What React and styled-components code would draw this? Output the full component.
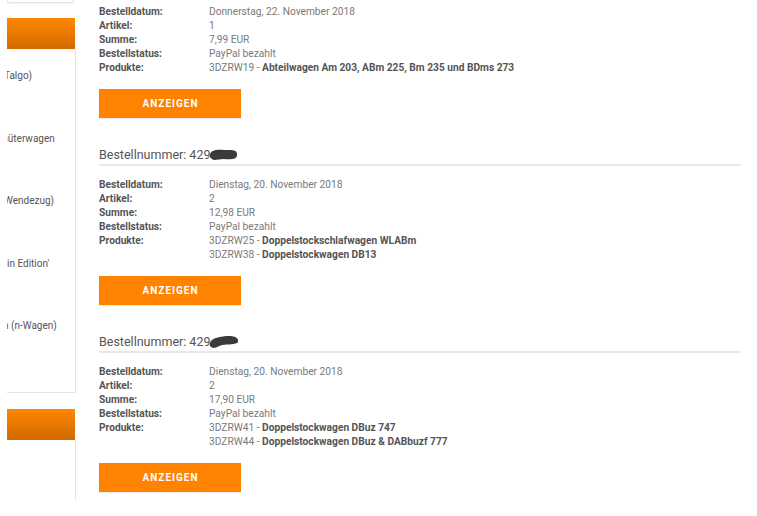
import React from 'react'
import styled, { createGlobalStyle } from 'styled-components'

const GlobalStyle = createGlobalStyle`
  html, body {
    margin: 0;
    padding: 0;
    background: #fff;
  }
  body {
    font-family: Roboto, "Liberation Sans", Arial, sans-serif;
    overflow: hidden;
  }
`

const Page = styled.div`
  display: flex;
  align-items: flex-start;
  width: 757px;
  height: 516px;
  overflow: hidden;
`

const Sidebar = styled.aside`
  width: 69px;
  margin-left: 7px;
  flex-shrink: 0;
  display: flex;
  flex-direction: column;
`

const TopCard = styled.div`
  height: 2px;
  margin-right: 2px;
  border: 1px solid #e4e4e4;
  border-top: none;
  border-radius: 0 0 4px 4px;
  box-shadow: 0 1px 2px rgba(0, 0, 0, 0.06);
`

const OrangeBar = styled.div`
  height: 31px;
  margin-top: ${p => p.$top}px;
  margin-right: 1px;
  background: linear-gradient(#ff8700, #d26a00);
`

const Panel = styled.div`
  padding: 20px 0 10px;
  border-right: 1px solid #e3e3e3;
  border-bottom: ${p => (p.$open ? 'none' : '1px solid #e3e3e3')};
  height: ${p => (p.$open ? '60px' : 'auto')};
  box-sizing: border-box;
`

const SideItem = styled.div`
  height: 62.5px;
  font-size: 10px;
  line-height: 14px;
  color: #555;
  white-space: nowrap;
  overflow: hidden;
  text-indent: -${p => p.$cut}px;
`

const Main = styled.main`
  flex: 1;
  margin: 0 16px 0 23px;
  padding-top: 5px;
`

const Order = styled.section`
  & + & {
    margin-top: 29px;
  }
`

const Heading = styled.h2`
  display: flex;
  align-items: center;
  margin: 0 0 12px;
  padding-bottom: 1px;
  font-size: 12.5px;
  line-height: 16px;
  font-weight: 400;
  color: #555;
  border-bottom: 2px solid #e8e8e8;
`

const Redacted = styled.svg`
  width: 30px;
  height: 14px;
  margin-left: -1px;
`

const Details = styled.dl`
  display: grid;
  grid-template-columns: 110px 1fr;
  margin: 0;
  font-size: 10.2px;
  line-height: 14px;
`

const Label = styled.dt`
  font-weight: 700;
  color: #555;
`

const Value = styled.dd`
  margin: 0;
  color: #7a7a7a;

  b {
    color: #555;
  }
`

const ShowButton = styled.button`
  display: block;
  width: 142px;
  height: 29px;
  margin-top: 14px;
  padding: 0 0 0 1px;
  border: none;
  background: #ff8200;
  color: #fff;
  font-family: inherit;
  font-size: 10px;
  font-weight: 700;
  letter-spacing: 1px;
  box-shadow: 0 1px 1px rgba(0, 0, 0, 0.08);
`

const scribbles = {
  a: 'M1 7 C1 2, 8 1, 15 2 C21 2, 28 1, 28 6 C29 11, 22 12, 15 11 C9 11, 5 13, 3 11 C1 10, 1 9, 1 7 Z',
  b: 'M1 8 C2 3, 12 1, 20 1 C26 1, 30 3, 29 7 C27 10, 19 9, 13 10 C9 11, 7 13, 4 13 C2 12, 0 11, 1 8 Z'
}

const sideItems = [
  { text: 'Talgo)', cut: 3 },
  { text: 'Güterwagen', cut: 6 },
  { text: 'Wendezug)', cut: 3 },
  { text: 'in Edition\'', cut: 0 },
  { text: 'n (n-Wagen)', cut: 4 }
]

const orders = [
  {
    number: null,
    date: 'Donnerstag, 22. November 2018',
    count: '1',
    sum: '7,99 EUR',
    products: [['3DZRW19', 'Abteilwagen Am 203, ABm 225, Bm 235 und BDms 273']]
  },
  {
    number: 'a',
    date: 'Dienstag, 20. November 2018',
    count: '2',
    sum: '12,98 EUR',
    products: [
      ['3DZRW25', 'Doppelstockschlafwagen WLABm'],
      ['3DZRW38', 'Doppelstockwagen DB13']
    ]
  },
  {
    number: 'b',
    date: 'Dienstag, 20. November 2018',
    count: '2',
    sum: '17,90 EUR',
    products: [
      ['3DZRW41', 'Doppelstockwagen DBuz 747'],
      ['3DZRW44', 'Doppelstockwagen DBuz & DABbuzf 777']
    ]
  }
]

const App = () => {
  return (
    <Page>
      <GlobalStyle />
      <Sidebar>
        <TopCard />
        <OrangeBar $top={15} />
        <Panel>
          {sideItems.map(item => (
            <SideItem key={item.text} $cut={item.cut}>{item.text}</SideItem>
          ))}
        </Panel>
        <OrangeBar $top={16} />
        <Panel $open />
      </Sidebar>

      <Main>
        {orders.map((order, i) => (
          <Order key={i}>
            {order.number && (
              <Heading>
                Bestellnummer: 429
                <Redacted viewBox="0 0 30 14">
                  <path d={scribbles[order.number]} fill="#3a3a3a" />
                </Redacted>
              </Heading>
            )}
            <Details>
              <Label>Bestelldatum:</Label>
              <Value>{order.date}</Value>
              <Label>Artikel:</Label>
              <Value>{order.count}</Value>
              <Label>Summe:</Label>
              <Value>{order.sum}</Value>
              <Label>Bestellstatus:</Label>
              <Value>PayPal bezahlt</Value>
              <Label>Produkte:</Label>
              <Value>
                {order.products.map(([code, name]) => (
                  <div key={code}>
                    {code} - <b>{name}</b>
                  </div>
                ))}
              </Value>
            </Details>
            <ShowButton>ANZEIGEN</ShowButton>
          </Order>
        ))}
      </Main>
    </Page>
  )
}

export default App
